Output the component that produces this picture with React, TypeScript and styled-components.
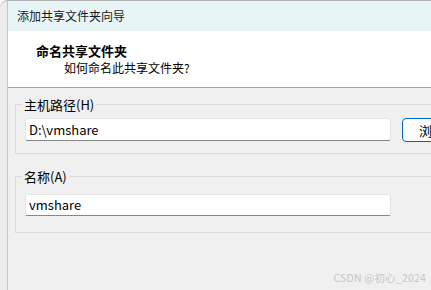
import React from "react";
import styled, { createGlobalStyle } from "styled-components";

const GlobalStyle = createGlobalStyle`
  html, body {
    margin: 0;
    width: 431px;
    height: 290px;
    overflow: hidden;
    background: #ffffff;
    font-family: "Noto Sans CJK SC", "Noto Sans", sans-serif;
  }
`;

const Frame = styled.div`
  position: relative;
  display: flex;
  height: 289px;
  padding-left: 7px;
  background: #ececec;
  border-top: 1px solid #b4b4b4;
  border-top-left-radius: 8px;
  overflow: hidden;
`;

const Dialog = styled.div`
  display: flex;
  flex-direction: column;
  flex: 0 0 560px;
  background: #f0f0f0;
  border-left: 1px solid #c4c4c4;
`;

const TitleBar = styled.div`
  height: 30px;
  line-height: 29px;
  padding-left: 9px;
  background: #e7f5f7;
  color: #1a1a1a;
  font-size: 12px;
`;

const Header = styled.div`
  height: 45px;
  padding: 11px 0 0 28px;
  background: #ffffff;
  border-bottom: 1px solid #a0a0a0;
`;

const Heading = styled.div`
  font-size: 13px;
  font-weight: 700;
  line-height: 17px;
  color: #000;
`;

const SubHeading = styled.div`
  margin-left: 28px;
  font-size: 12px;
  line-height: 17px;
  color: #000;
`;

const Body = styled.div`
  display: flex;
  flex-direction: column;
  gap: 22px;
  padding: 16px 0 0 7px;
`;

const Group = styled.div<{ $padTop: number; $padBottom: number }>`
  position: relative;
  width: 490px;
  box-sizing: border-box;
  padding: ${(p) => p.$padTop}px 10px ${(p) => p.$padBottom}px 9px;
  border: 1px solid #dcdcdc;
`;

const GroupLabel = styled.span`
  position: absolute;
  top: -9px;
  left: 6px;
  padding: 0 2px;
  background: #f0f0f0;
  font-size: 13px;
  line-height: 17px;
  color: #000;
`;

const Row = styled.div`
  display: flex;
  align-items: flex-start;
  gap: 11px;
`;

const TextBox = styled.input<{ $h: number }>`
  width: 366px;
  height: ${(p) => p.$h}px;
  box-sizing: border-box;
  margin: 0;
  padding: 0 0 0 3px;
  border: 1px solid #e4e4e4;
  border-bottom: 1px solid #868686;
  border-radius: 2px;
  background: #ffffff;
  font-family: "Noto Sans CJK SC", "Noto Sans", sans-serif;
  font-size: 13px;
  color: #000;
  outline: none;
`;

const Button = styled.button`
  width: 88px;
  height: 24px;
  margin: 0;
  padding: 0;
  border: 1px solid #0067c0;
  border-radius: 4px;
  background: #fdfdfd;
  font-family: "Noto Sans CJK SC", "Noto Sans", sans-serif;
  font-size: 13px;
  color: #000;
`;

const Watermark = styled.div`
  position: absolute;
  right: 5px;
  bottom: 5px;
  font-size: 10.5px;
  color: #c6c6c6;
  letter-spacing: 0.2px;
`;

const App: React.FC = () => {
  return (
    <>
      <GlobalStyle />
      <Frame>
        <Dialog>
          <TitleBar>添加共享文件夹向导</TitleBar>
          <Header>
            <Heading>命名共享文件夹</Heading>
            <SubHeading>如何命名此共享文件夹?</SubHeading>
          </Header>
          <Body>
            <Group $padTop={13} $padBottom={11}>
              <GroupLabel>主机路径(H)</GroupLabel>
              <Row>
                <TextBox $h={23} defaultValue="D:\vmshare" />
                <Button>浏览(R)...</Button>
              </Row>
            </Group>
            <Group $padTop={14} $padBottom={16}>
              <GroupLabel>名称(A)</GroupLabel>
              <TextBox $h={22} defaultValue="vmshare" />
            </Group>
          </Body>
        </Dialog>
        <Watermark>CSDN @初心_2024</Watermark>
      </Frame>
    </>
  );
};

export default App;
